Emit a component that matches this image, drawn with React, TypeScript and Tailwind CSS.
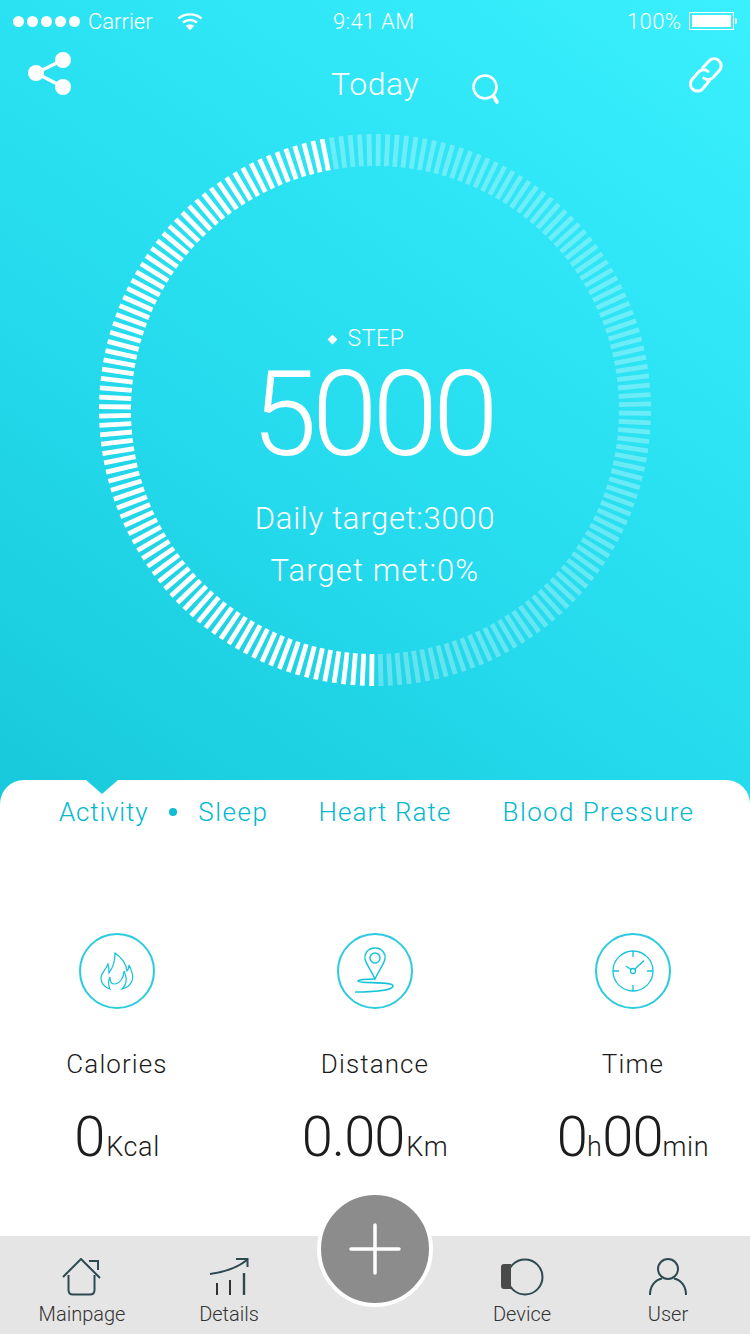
import React from "react";

const font = { fontFamily: "Roboto, 'Noto Sans', sans-serif" };

function Ring() {
  const ticks = [];
  const n = 184;
  for (let i = 0; i < n; i++) {
    const a = 0.7 + (i * 360) / n;
    const bright = a >= 179 && a <= 349.5;
    ticks.push(
      <rect
        key={i}
        x={273.6}
        y={0}
        width={4.8}
        height={32}
        fill="#fff"
        opacity={bright ? 1 : 0.3}
        transform={`rotate(${a} 276 276)`}
      />
    );
  }
  return (
    <svg className="absolute inset-0" width="552" height="552" viewBox="0 0 552 552">
      {ticks}
    </svg>
  );
}

function Stat({ label, icon, value }: { label: string; icon: React.ReactNode; value: React.ReactNode }) {
  return (
    <div className="flex flex-col items-center">
      <div className="w-[76px] h-[76px] rounded-full border-2 border-[#2ccbdf] flex items-center justify-center">{icon}</div>
      <div className="mt-[39px] text-[26px] leading-[32px] text-[#1c1c1c] tracking-[1.1px] font-light">{label}</div>
      <div className="mt-[24px] h-[66px] flex items-baseline text-[#1c1c1c] font-light whitespace-nowrap">{value}</div>
    </div>
  );
}

function NavItem({ w, label, icon }: { w: string; label: string; icon: React.ReactNode }) {
  return (
    <div className={`${w} flex flex-col items-center pt-[21px]`}>
      <div className="h-[40px] flex items-center justify-center">{icon}</div>
      <div className="mt-[4px] text-[20px] leading-[26px] text-[#333] font-light">{label}</div>
    </div>
  );
}

export default function App() {
  return (
    <div style={font} className="relative w-[750px] h-[1334px] overflow-hidden bg-white flex flex-col">
      <div className="h-[810px] shrink-0 bg-[linear-gradient(215deg,#3af0fe_0%,#2be2f3_39%,#24daec_61%,#17c8da_100%)] text-white">
        <div className="h-[40px] pt-[2px] flex items-center text-[22px] font-light">
          <div className="ml-[13px] flex gap-[3px]">
            {[0, 1, 2, 3, 4].map((i) => (
              <div key={i} className="w-[11px] h-[11px] rounded-full bg-white" />
            ))}
          </div>
          <span className="ml-[8px] w-[89px]">Carrier</span>
          <svg width="26" height="19" viewBox="0 0 26 19" fill="none" stroke="#fff" strokeWidth="2.4">
            <path d="M1.5 6.5C7.5 1 18.5 1 24.5 6.5" />
            <path d="M6 10.5C10 7.2 16 7.2 20 10.5" />
            <path d="M13 18.5L8.8 13.8C11 12 15 12 17.2 13.8Z" fill="#fff" stroke="none" />
          </svg>
          <span className="ml-[130px] w-[81px] tracking-[0.3px] whitespace-nowrap">9:41 AM</span>
          <span className="ml-[213px] tracking-[0.4px]">100%</span>
          <div className="ml-[8px] w-[45px] h-[18px] border border-white p-[2px]">
            <div className="w-full h-full bg-white" />
          </div>
          <div className="ml-[1px] w-[2px] h-[6px] bg-white rounded-r" />
        </div>
        <div className="h-[94px] flex items-start">
          <svg className="ml-[28px] mt-[12px]" width="44" height="44" viewBox="0 0 44 44" fill="#fff" stroke="#fff">
            <path d="M8 21L35 8M8 21L35 35" strokeWidth="3.5" fill="none" />
            <circle cx="8" cy="21" r="8" stroke="none" />
            <circle cx="35" cy="8" r="8" stroke="none" />
            <circle cx="35" cy="35" r="8" stroke="none" />
          </svg>
          <div className="ml-[259px] mt-[24px] text-[32px] leading-[40px] font-light tracking-[0.6px]">Today</div>
          <svg className="ml-[52px] mt-[32px]" width="32" height="34" viewBox="0 0 32 34" fill="none" stroke="#fff" strokeLinecap="round">
            <circle cx="14" cy="15" r="11.5" strokeWidth="2.6" />
            <path d="M22.5 24L26 30" strokeWidth="3.6" />
          </svg>
          <svg className="ml-[183px] mt-[16px]" width="40" height="38" viewBox="0 0 40 38" fill="none" stroke="#fff" strokeWidth="3" strokeLinecap="round">
            <path d="M16.5 12L23 5C25.5 2.3 29.5 2 32.5 4.3C35.8 7 36 11.5 33.3 14.5L27 21.5C24.5 24 20.5 24.5 17.8 22" />
            <path d="M23.5 24.5L17 32.5C14.5 35.5 10 36 7 33.5C3.8 30.8 3.6 26.3 6.2 23.2L12.8 15.8C15.3 13.2 19.3 13 22 15.3" />
          </svg>
        </div>
        <div className="relative w-[552px] h-[552px] mx-auto flex flex-col items-center">
          <Ring />
          <div className="mt-[192px] h-[26px] flex items-center text-[23px] font-light tracking-[0.6px] pr-[16px]">
            <div className="w-[7px] h-[7px] rotate-45 bg-white mr-[11px]" />
            STEP
          </div>
          <div className="mt-[4px] text-[118px] leading-[118px] font-[350] tracking-[-5px] pr-[5px]">5000</div>
          <div className="mt-[25px] text-[31px] leading-[40px] font-light tracking-[0.7px]">Daily target:3000</div>
          <div className="mt-[12px] text-[31px] leading-[40px] font-light tracking-[1.1px]">Target met:0%</div>
        </div>
      </div>

      <div className="relative -mt-[30px] flex-1 bg-white rounded-t-[24px] flex flex-col">
        <div className="absolute left-[86px] top-0 w-0 h-0 border-l-[16px] border-r-[16px] border-t-[14px] border-l-transparent border-r-transparent border-t-[#1bcbde]" />
        <div className="flex items-center h-[38px] mt-[13px] text-[26px] font-light text-[#00b8cf] whitespace-nowrap">
          <span className="ml-[59px] tracking-[0.8px]">Activity</span>
          <span className="ml-[21px] w-[8px] h-[8px] rounded-full bg-[#0fbcd2]" />
          <span className="ml-[21px] tracking-[1.5px]">Sleep</span>
          <span className="ml-[50px] tracking-[1.1px]">Heart Rate</span>
          <span className="ml-[51px] tracking-[1.4px]">Blood Pressure</span>
        </div>
        <div className="mt-[102px] grid grid-cols-[258px_258px_258px] justify-center">
          <Stat
            label="Calories"
            icon={
              <svg width="34" height="40" viewBox="0 0 34 40" fill="none" stroke="#14c3d8" strokeWidth="1.2">
                <path d="M10 38C4 36 1 32 1 27C1 22 5 20 8 13C9 16 9 19 9 22C12 18 15 10 15 2C21 6 26 12 27 20C29 18 29 16 29 14C32 20 34 25 32 30C30 35 26 37 22 38C27 33 27 26 24 20C24 26 20 33 14 33C10 33 10 28 10 26C8 30 8 34 10 38Z" />
              </svg>
            }
            value={
              <>
                <span className="text-[56px] leading-[66px] tracking-[-1px]">0</span>
                <span className="text-[27px] tracking-[0.6px] ml-[2px]">Kcal</span>
              </>
            }
          />
          <Stat
            label="Distance"
            icon={
              <svg width="44" height="50" viewBox="0 0 44 50" fill="none" stroke="#14c3d8" strokeWidth="1.4">
                <path d="M22 2C14 2 11 9 12 13C13 18 19 26 22 33C25 26 31 18 32 13C33 9 30 2 22 2Z" />
                <circle cx="22" cy="12" r="5" />
                <path d="M22 33C14 33 6 33.500 5 35C5 38 40 35 40 40C40 44 22 46 2 46" strokeWidth="1.6" />
              </svg>
            }
            value={
              <>
                <span className="text-[56px] leading-[66px] tracking-[-1px]">0.00</span>
                <span className="text-[27px] tracking-[0.6px] ml-[2px]">Km</span>
              </>
            }
          />
          <Stat
            label="Time"
            icon={
              <svg width="42" height="42" viewBox="0 0 42 42" fill="none" stroke="#14c3d8" strokeWidth="1.3">
                <circle cx="21" cy="21" r="20" />
                <circle cx="21" cy="21" r="2.500" />
                <path d="M21 1V7M21 35V41M1 21H7M35 21H41M23 19L32 10.500M19 19.500L14 16" />
              </svg>
            }
            value={
              <>
                <span className="text-[56px] leading-[66px] tracking-[-1px]">0</span>
                <span className="text-[27px] tracking-[0.6px]">h</span>
                <span className="text-[56px] leading-[66px] tracking-[-1px]">00</span>
                <span className="text-[27px] tracking-[0.6px]">min</span>
              </>
            }
          />
        </div>
        <div className="absolute left-0 right-0 bottom-0 h-[98px] bg-[#e5e5e5] flex">
          <NavItem
            w="w-[164px]"
            label="Mainpage"
            icon={
              <svg width="40" height="38" viewBox="0 0 40 38" fill="none" stroke="#2c4a50" strokeWidth="2">
                <path d="M1 19L19 1L38 20" />
                <path d="M6.500 17V32C6.500 35 8 36.500 11 36.500H28C31 36.500 32.500 35 32.500 32V17" />
                <path d="M27 3H36V12" />
              </svg>
            }
          />
          <NavItem
            w="w-[130px]"
            label="Details"
            icon={
              <svg width="40" height="38" viewBox="0 0 40 38" fill="none" stroke="#2c4a50" strokeWidth="2">
                <path d="M1 16C16 14 28 10 38 2" />
                <path d="M27 1H38.500V9" />
                <path d="M8 25V37M21 22V37" stroke="#333" />
                <path d="M35 15V37" strokeWidth="2.4" />
              </svg>
            }
          />
          <div className="w-[162px]" />
          <NavItem
            w="w-[132px]"
            label="Device"
            icon={
              <svg width="44" height="38" viewBox="0 0 44 38" fill="none">
                <circle cx="25" cy="19" r="17.500" stroke="#2c4a50" strokeWidth="2" />
                <path d="M11 6H4Q1 6 1 9V28Q1 31 4 31H11Z" fill="#4a4a4a" />
              </svg>
            }
          />
          <NavItem
            w="w-[160px]"
            label="User"
            icon={
              <svg width="38" height="38" viewBox="0 0 38 38" fill="none" stroke="#2c4a50" strokeWidth="2">
                <circle cx="19" cy="11" r="10" />
                <path d="M1 37C1 28 6 22 13 20.500M25 20.500C32 22 37 28 37 37" />
              </svg>
            }
          />
        </div>
        <div className="absolute left-[317px] top-[411px] w-[116px] h-[116px] rounded-full bg-[#8c8c8c] border-[4px] border-white flex items-center justify-center">
          <svg width="52" height="52" viewBox="0 0 52 52" stroke="#fff" strokeWidth="3.5" strokeLinecap="round">
            <path d="M26 2V50M2 26H50" />
          </svg>
        </div>
      </div>
    </div>
  );
}
